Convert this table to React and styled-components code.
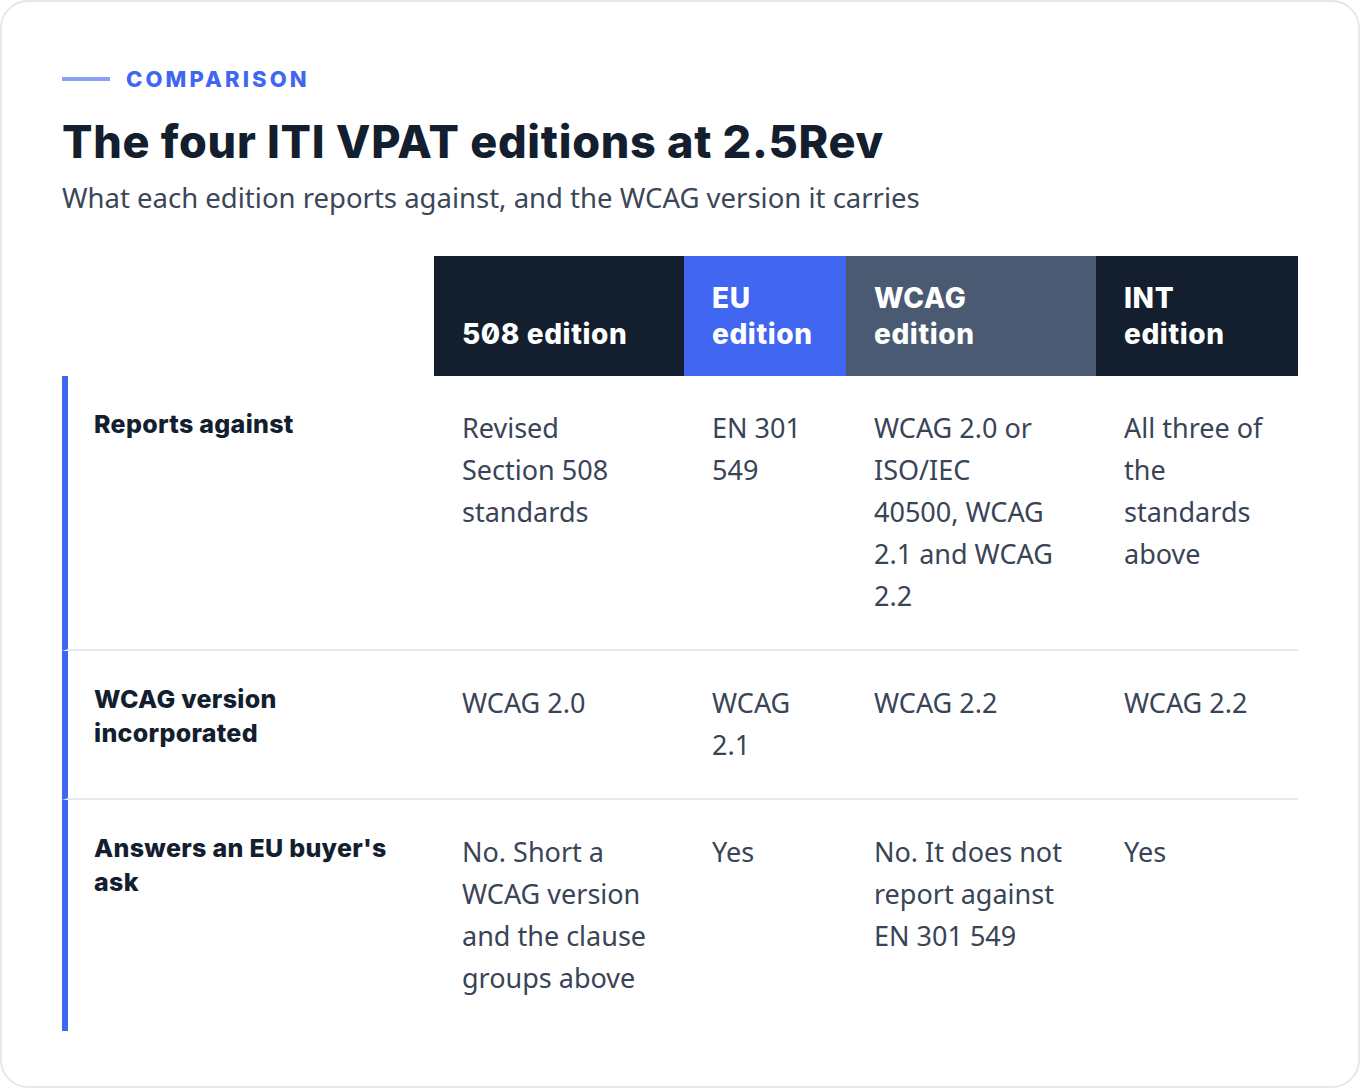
import React from "react";
import styled, { createGlobalStyle } from "styled-components";

const Global = createGlobalStyle`
  html, body { margin: 0; padding: 0; background: #ffffff; }
  * { box-sizing: border-box; }
`;

const Card = styled.section`
  width: 1360px;
  height: 1088px;
  border: 2px solid #e3e7ee;
  border-radius: 28px;
  background: #ffffff;
  padding: 62px 60px 0 60px;
  font-family: "Noto Sans", "Open Sans", sans-serif;
`;

const Eyebrow = styled.div`
  display: flex;
  align-items: center;
  gap: 16px;
  height: 30px;
`;

const EyebrowLine = styled.span`
  display: block;
  width: 48px;
  height: 4px;
  background: #89a0f5;
`;

const EyebrowText = styled.span`
  font-family: Inter, sans-serif;
  font-weight: 800;
  font-size: 22px;
  letter-spacing: 3.1px;
  color: #4166f1;
`;

const Title = styled.h1`
  margin: 20px 0 0 0;
  font-family: Inter, sans-serif;
  font-weight: 800;
  font-size: 45px;
  line-height: 56px;
  letter-spacing: 0.7px;
  color: #131e2f;
`;

const Subtitle = styled.p`
  margin: 8px 0 0 0;
  font-size: 27.5px;
  line-height: 40px;
  color: #3b4658;
`;

const Table = styled.div`
  margin-top: 38px;
  display: grid;
  grid-template-columns: 372px 250px 162px 250px 202px;
`;

const Line = styled.span`
  display: block;
  white-space: nowrap;
`;

const HeadCell = styled.div`
  height: 120px;
  padding: 0 20px 24px 28px;
  display: flex;
  flex-direction: column;
  justify-content: flex-end;
  background: ${(p) => p.$bg};
  color: #ffffff;
  font-family: Inter, sans-serif;
  font-feature-settings: "zero" 1;
  font-weight: 800;
  font-size: 28px;
  line-height: 36px;
  letter-spacing: 0.6px;
`;

const EmptyHead = styled.div`
  height: 120px;
`;

const LabelCell = styled.div`
  border-left: 6px solid #4166f1;
  padding: 31px 20px 32px 26px;
  border-bottom: ${(p) => (p.$last ? "none" : "2px solid #e4e8f0")};
  font-family: Inter, sans-serif;
  font-weight: 800;
  font-size: 25px;
  line-height: 34px;
  letter-spacing: 0.3px;
  color: #131e2f;
`;

const Cell = styled.div`
  padding: 31px 20px 32px 28px;
  border-bottom: ${(p) => (p.$last ? "none" : "2px solid #e4e8f0")};
  font-size: 27px;
  line-height: 42px;
  color: #394457;
`;

const headers = [
  { lines: ["508 edition"], bg: "#131e2f" },
  { lines: ["EU", "edition"], bg: "#4166f1" },
  { lines: ["WCAG", "edition"], bg: "#4a5a73" },
  { lines: ["INT", "edition"], bg: "#131e2f" },
];

const rows = [
  {
    label: ["Reports against"],
    cells: [
      ["Revised", "Section 508", "standards"],
      ["EN 301", "549"],
      ["WCAG 2.0 or", "ISO/IEC", "40500, WCAG", "2.1 and WCAG", "2.2"],
      ["All three of", "the", "standards", "above"],
    ],
  },
  {
    label: ["WCAG version", "incorporated"],
    cells: [["WCAG 2.0"], ["WCAG", "2.1"], ["WCAG 2.2"], ["WCAG 2.2"]],
  },
  {
    label: ["Answers an EU buyer's", "ask"],
    cells: [
      ["No. Short a", "WCAG version", "and the clause", "groups above"],
      ["Yes"],
      ["No. It does not", "report against", "EN 301 549"],
      ["Yes"],
    ],
  },
];

const Lines = ({ lines }) => lines.map((l, i) => <Line key={i}>{l}</Line>);

export default function App() {
  return (
    <>
      <Global />
      <Card>
        <Eyebrow>
          <EyebrowLine />
          <EyebrowText>COMPARISON</EyebrowText>
        </Eyebrow>
        <Title>The four ITI VPAT editions at 2.5Rev</Title>
        <Subtitle>What each edition reports against, and the WCAG version it carries</Subtitle>
        <Table>
          <EmptyHead />
          {headers.map((h, i) => (
            <HeadCell key={i} $bg={h.bg}>
              <Lines lines={h.lines} />
            </HeadCell>
          ))}
          {rows.map((r, i) => {
            const last = i === rows.length - 1;
            return (
              <React.Fragment key={i}>
                <LabelCell $last={last}>
                  <Lines lines={r.label} />
                </LabelCell>
                {r.cells.map((c, j) => (
                  <Cell key={j} $last={last}>
                    <Lines lines={c} />
                  </Cell>
                ))}
              </React.Fragment>
            );
          })}
        </Table>
      </Card>
    </>
  );
}
